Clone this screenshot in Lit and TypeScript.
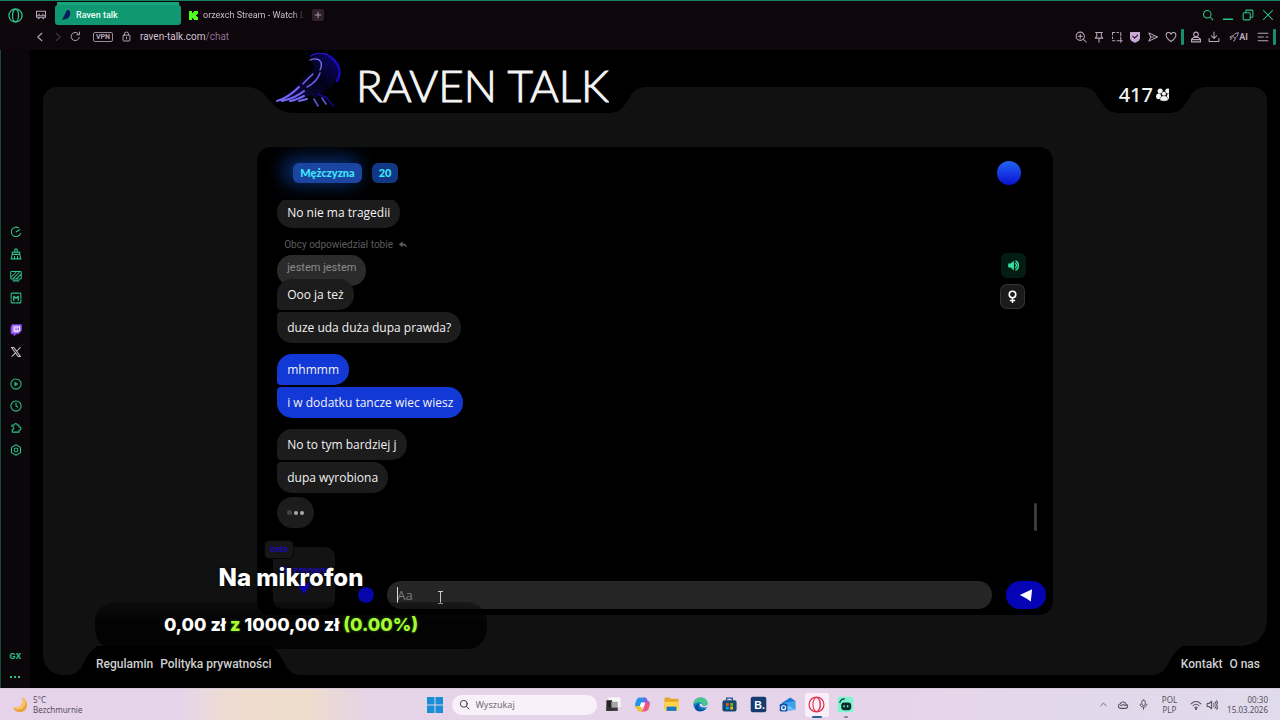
import { LitElement, html, css, svg } from "lit";
import { customElement } from "lit/decorators.js";
import { classMap } from "lit/directives/class-map.js";

const icon = (body: unknown, size = 12, box = 16) => html`<svg
  class="ic" width=${size} height=${size} viewBox="0 0 ${box} ${box}" fill="none"
  stroke="currentColor" stroke-width="1.4" stroke-linecap="round" stroke-linejoin="round"
  aria-hidden="true">${body}</svg>`;

const G = {
  opera: svg`<circle cx="8" cy="8" r="7"/><ellipse cx="8" cy="8" rx="3.2" ry="6.6"/>`,
  workspace: svg`<path d="M2 3h12v8h-2l-1 2-1.500-2h-3L5 13l-1-2H2z"/><path d="M5 7h1M10 7h1M2 9h12"/>`,
  back: svg`<path d="M10.500 3 5 8l5.500 5"/>`,
  forward: svg`<path d="m5.500 3 5.500 5-5.500 5"/>`,
  reload: svg`<path d="M13.500 9.500A6 6 0 1 1 12 3.800M13.800 1.500v4h-4"/>`,
  lock: svg`<rect x="3" y="6" width="10" height="8.500" rx="1"/><path d="M5 6V4.500a3 3 0 0 1 6 0V6M8 9v2.500"/>`,
  plus: svg`<path d="M8 3.500v9M3.500 8h9"/>`,
  search: svg`<circle cx="7" cy="7" r="5"/><path d="m11 11 3.500 3.500"/>`,
  min: svg`<path stroke-width="2" d="M2 13.500h12"/>`,
  restore: svg`<rect x="1.500" y="5" width="9.500" height="9.500" rx="1.500"/><path d="M5 5V2.500c0-.6.4-1 1-1h7.500c.6 0 1 .4 1 1V10c0 .6-.4 1-1 1H11"/>`,
  close: svg`<path d="m2 2 12 12M14 2 2 14"/>`,
  zoomIn: svg`<circle cx="7" cy="7" r="5.500"/><path d="m11 11 4 4M7 4.500v5M4.500 7h5"/>`,
  pin: svg`<path d="M3.500 2h9M5 2v5l-2 2.500h10L11 7V2M8 9.500V15"/>`,
  snap: svg`<path d="M2 5V2h3M8 2h2M13 2v4M2 8v2M2 13h3M8 13h2M13 8v7M11 13h4"/>`,
  shield: svg`<path d="M2 2h12v7c0 3-3 5-6 6-3-1-6-3-6-6z" fill="#c9a9d8" stroke="#c9a9d8"/><path d="m5 7 2.500 2.500L11.500 5.500" stroke="#1a0f1e"/>`,
  flow: svg`<path d="M2.500 2.500 14 8 2.500 13.500 5 8zM5 8h4"/>`,
  heart: svg`<path d="M8 14C4 11 1.500 8.500 1.500 5.500a3.300 3.300 0 0 1 6.500-1 3.300 3.300 0 0 1 6.500 1C14.500 8.500 12 11 8 14z"/>`,
  stamp: svg`<circle cx="8" cy="4.500" r="3"/><path d="M5 8.500h6l3 2.500v3.500H2V11zM2 11.500h12"/>`,
  download: svg`<path d="M8 1.500v8M4.500 6.500 8 10l3.500-3.500M1.500 10v4h13v-4"/>`,
  rocket: svg`<path d="M14.500 1.500c-4 0-7 2-8.500 5l3.500 3.500c3-1.500 5-4.500 5-8.500zM6 6.500H3L1.500 9 5 9.500M9.500 10v3L7 14.500M2 12l2-1"/>`,
  menu: svg`<path d="M1.500 3h13M1.500 8h7M12 8h2.500M1.500 13h13"/>`,
  gauge: svg`<path d="M14 10a6.300 6.300 0 1 1-2.500-7.500M8 8l5-3"/>`,
  broom: svg`<path d="M6.500 5V1.500h3V5M3 5.500h10v3H3zM3 8.500 1.500 14.500h13L13 8.500M6 11v3.500M10 11v3.500"/>`,
  hatch: svg`<rect x="1" y="2" width="14" height="10" rx="1"/><path d="m2 9 6-6M4 11.500 12.500 3M8.500 11.500 14.500 6M4 14.500h8"/>`,
  mod: svg`<rect x="1.500" y="1.500" width="13" height="13" rx="1" stroke-dasharray="9 1.500"/><path d="M5 11V5.500L8 8.500l3-3V11" stroke-width="1.800"/>`,
  twitch: svg`<path d="M3 1h12v8l-4 4H8l-2.500 2.500V13H1.500V4z" fill="#a970ff" stroke="#7b3fe4"/><path d="M5 3h8.500v5.500l-2 2H5z" fill="#e8dcff" stroke="none"/><path d="M8 5v3M11 5v3" stroke="#7b3fe4"/>`,
  x: svg`<path d="M2 2h3l9 12h-3zM13.500 2 9 7M7 9.500 2.500 14" stroke="#cfcbd0"/>`,
  play: svg`<circle cx="8" cy="8" r="6.800"/><path d="M6.500 5.500 10.500 8l-4 2.500z" fill="currentColor" stroke-width=".6"/>`,
  clock: svg`<circle cx="8" cy="8" r="6.800"/><path d="M8 4v4l2.500 1.500"/>`,
  puzzle: svg`<path d="M3 13.500V10c3 0 3-4-.500-4V4h3.500C6 1.500 9.500 1.500 9.500 4H12v2.500c3.500 0 3.500 4.500 0 4.500v2.500z"/>`,
  gear: svg`<path d="m8 1 6 3.500v7L8 15l-6-3.500v-7z"/><circle cx="8" cy="8" r="2.600"/>`,
  reply: svg`<path d="M7 2 1.500 7 7 12V9c4-.3 6 1 7.500 4C14.500 8 12 5.200 7 5z" fill="currentColor" stroke="none"/>`,
  sound: svg`<path d="M1.500 5.500h3L8.500 2v12l-4-3.500h-3z" fill="currentColor" stroke="none"/><path d="M10.500 5.500c1.500 1.500 1.500 3.500 0 5M11 2.500c4 2 4 9 0 11" stroke-width="1.800"/>`,
  female: svg`<circle cx="8" cy="5.500" r="4" stroke-width="2"/><path d="M8 9.500v6M5.500 12.800h5" stroke-width="1.800"/>`,
  users: svg`<g fill="currentColor" stroke="none"><circle cx="4.200" cy="4" r="2.600"/><circle cx="11.800" cy="4" r="2.600"/><ellipse cx="2.600" cy="9.300" rx="2.500" ry="2.900"/><ellipse cx="13.400" cy="9.300" rx="2.500" ry="2.900"/></g><circle cx="8" cy="6.800" r="2.400" fill="currentColor" stroke="#000" stroke-width=".5"/><path d="M3.800 13c0-3 1.700-4.200 4.200-4.200s4.200 1.200 4.200 4.200c0 1.500-8.400 1.500-8.400 0z" fill="currentColor" stroke="#000" stroke-width=".4"/>`,
  send: svg`<path d="M1 8 15 1.500 13.500 15.500 8.500 12z" fill="#fff" stroke="none"/>`,
  chevron: svg`<path d="m3 10.500 5-5 5 5"/>`,
  cloud: svg`<path d="M4.500 12.500a3.200 3.200 0 0 1 0-6.300 4 4 0 0 1 7.500.8 2.800 2.800 0 0 1 0 5.500zM5 9c2-1.500 5-1.500 7 0"/>`,
  mic: svg`<rect x="5.500" y="1.500" width="5" height="8" rx="2.500"/><path d="M3 7.500c0 6 10 6 10 0M8 12v3"/>`,
  wifi: svg`<path d="M1.500 6.500c4-4 9-4 13 0M4 9c2.500-2.500 5.500-2.500 8 0M6.500 11.500c1-1 2-1 3 0"/><circle cx="8" cy="13" r=".8" fill="currentColor"/>`,
  volume: svg`<path d="M1.500 6h2.500l3.500-3v10L4 10H1.500zM10 6c1 1 1 3 0 4M12 4c2.300 2 2.300 6 0 8M14 2.500c3 3 3 8 0 11"/>`,
};

const APPS = [
  { name: "Widok zadań", art: svg`<rect x="5" y="2" width="17" height="14" fill="#f8f8f8"/><rect x="2" y="6" width="8" height="15" fill="#252525"/><rect x="2" y="16" width="16" height="5" fill="#333"/><rect x="9" y="8" width="9" height="8" fill="#a8a4a8"/>` },
  { name: "Copilot", art: svg`<path d="M8 2h7c2 0 3 1 3.500 3L20 9l-8 4-8 4c-3-1-3-5-1-10 1-3 2-5 5-5z" fill="#2495e6"/><path d="M14 2c3 0 4 1 5 5 3 0 4 2 3 5l-2 5-7-4z" fill="#8d5be8"/><path d="M2 14h7l4 8H9c-3 0-4-1-5-4z" fill="#eec22e"/><path d="M21 9c2 2 1 5 0 8-1 3-3 5-6 5H9c3 0 4-3 5-6l2-7z" fill="#f0567c"/><path d="M10 9h6l-2 6H8z" fill="#fff"/>` },
  { name: "Eksplorator plików", art: svg`<path d="M2 4c0-1 1-2 2-2h5l2 2h10c1 0 1 1 1 2v12H2z" fill="#e4a623"/><path d="M2 8h20v11c0 1-1 2-2 2H4c-1 0-2-1-2-2z" fill="#ffd44d"/><path d="M5 15h14v6H5z" fill="#1676cc"/>` },
  { name: "Edge", art: svg`<circle cx="12" cy="12" r="10" fill="#1279c8"/><path d="M2 12C2 5 8 2 13 2c6 0 9 4 9 8 0 3-3 5-7 4 1-5-6-8-13-2z" fill="#46c98b"/><path d="M10 11c-3 5 1 10 9 7-4 5-17 5-14-4 1-2 3-3 5-3z" fill="#0b4d9c"/><path d="M11 11c-1 3 2 6 9 5 2 0 2-3 2-5-1 3-5 4-7 3 0-2-2-4-4-3z" fill="#e9dcee"/>` },
  { name: "Sklep", art: svg`<path d="M8 6V3h8v3" stroke="#1f5d8b" stroke-width="2" fill="none"/><rect x="2" y="6" width="20" height="16" rx="3" fill="#164970"/><path d="M7 10h4v4H7z" fill="#f25022"/><path d="M13 10h4v4h-4z" fill="#7fba00"/><path d="M7 15h4v4H7z" fill="#00a4ef"/><path d="M13 15h4v4h-4z" fill="#ffb900"/>` },
  { name: "Booking", art: svg`<rect x="1" y="1" width="22" height="22" rx="3" fill="#173a70"/><text x="6" y="18" font-size="15" font-weight="700" font-family="Liberation Sans, sans-serif" fill="#fff">B.</text>` },
  { name: "Outlook", art: svg`<path d="m4 10 12-8 7 5v12H6z" fill="#1976d2"/><path d="M8 9 23 7v12c-5 2-10 2-15 0z" fill="#3ba3ea"/><path d="m8 11 15 8H8z" fill="#76c6f6"/><rect x="1" y="11" width="11" height="11" rx="2" fill="#1458ad"/><circle cx="6.500" cy="16.500" r="2.800" stroke="#fff" stroke-width="1.600" fill="none"/>` },
  { name: "Opera GX", active: true, art: svg`<circle cx="12" cy="12" r="10.500" fill="none" stroke="#e0304f" stroke-width="1.700"/><ellipse cx="12" cy="12" rx="5" ry="10" fill="none" stroke="#e0304f" stroke-width="1.500"/><path d="M15 4c4 4 4 12 0 16" fill="none" stroke="#e0304f"/>` },
  { name: "Streamlabs", running: true, art: svg`<rect x="1" y="1" width="22" height="22" rx="3" fill="#7ff5cf"/><rect x="6" y="9" width="14" height="11" rx="4" fill="#0c2a26"/><path d="M10 13v3M15 13v3" stroke="#7ff5cf" stroke-width="2"/><path d="M4 10c0-4 3-6 7-6" fill="none" stroke="#0c2a26" stroke-width="1.700"/>` },
];

const MESSAGES = [
  { text: "duze uda duża dupa prawda?", last: true },
  { text: "mhmmm", own: true, gap: true, first: true },
  { text: "i w dodatku tancze wiec wiesz", own: true, last: true },
  { text: "No to tym bardziej j", gap: true, first: true },
  { text: "dupa wyrobiona", last: true },
];

const base = css`
  :host { box-sizing: border-box; }
  *, *::before, *::after { box-sizing: border-box; }
  button, input { font: inherit; color: inherit; background: none; border: 0; margin: 0; padding: 0; }
  a { color: inherit; text-decoration: none; }
  button { display: flex; align-items: center; justify-content: center; }
  svg { display: block; flex: none; }
`;

@customElement("browser-chrome")
class BrowserChrome extends LitElement {
  static styles = [base, css`
    :host { display: block; background: #0d060b; color: #b9a6ba; font-family: Roboto, sans-serif; border-top: 1px solid #15815f; }
    .row { display: flex; align-items: center; }
    .tabs { height: 28px; padding: 0 6px 0 8px; }
    .green { color: #2bc48a; }
    .tab { display: flex; align-items: center; gap: 5px; height: 20px; padding: 0 6px; font-size: 9px; }
    .current { width: 126px; margin-left: 8px; background: #109873; color: #e8fff6; border-radius: 3px; font-weight: 500; box-shadow: 0 -5px 0 -2px #1ba47b; }
    .other { width: 124px; margin-left: 2px; padding-right: 0; color: #cdbdcc; }
    .label { white-space: nowrap; overflow: hidden; }
    .other .label { mask-image: linear-gradient(90deg, #000 88%, transparent); }
    .add { width: 12px; height: 12px; background: #30202c; border-radius: 2px; margin-left: 5px; }
    .opera { margin-right: 12px; }
    .end { margin-left: auto; display: flex; align-items: center; gap: 8px; }
    .address { height: 21px; padding: 0 4px 6px 34px; gap: 6px; }
    .dim { opacity: .3; }
    .vpn { font-size: 7px; font-weight: 700; line-height: 8px; border: 1px solid #9b899b; border-radius: 2px; padding: 0 2px; margin: 0 2px 0 6px; }
    .url { font-size: 10px; color: #d3c1d2; margin-left: 2px; }
    .path { color: #8d6d91; }
    .bar { width: 3px; height: 16px; background: #178f6c; border-radius: 1px; margin-left: -2px; }
    .tools { gap: 6px; }
    .ai { display: flex; align-items: center; font-size: 9px; font-weight: 700; margin: 0 3px; }
  `];
  render() {
    return html`
      <div class="row tabs">
        <button class="green opera" aria-label="Opera">${icon(G.opera, 15)}</button>
        <button aria-label="Workspace">${icon(G.workspace, 12)}</button>
        <a class="tab current" href="#"><svg width="10" height="12" viewBox="0 0 10 12"><path d="M1 11 5 3c1-3 4-2 4 0 1 3-1 6-4 7z" fill="#0a1a5c"/></svg><span class="label">Raven talk</span></a>
        <a class="tab other" href="#"><svg width="9" height="9" viewBox="0 0 9 9"><path d="M0 0h3v2h1V1h1V0h4v3H8v1H7v1h1v1h1v3H5V8H4V7H3v2H0z" fill="#4dfc19"/></svg><span class="label">orzexch Stream - Watch L</span></a>
        <button class="add" aria-label="New tab">${icon(G.plus, 10)}</button>
        <div class="end green">
          <button aria-label="Search tabs">${icon(G.search)}</button>
          <button aria-label="Minimize">${icon(G.min)}</button>
          <button aria-label="Restore">${icon(G.restore)}</button>
          <button aria-label="Close">${icon(G.close)}</button>
        </div>
      </div>
      <div class="row address">
        <button aria-label="Back">${icon(G.back)}</button>
        <button class="dim" aria-label="Forward">${icon(G.forward)}</button>
        <button aria-label="Reload">${icon(G.reload, 11)}</button>
        <span class="vpn">VPN</span>
        ${icon(G.lock, 11)}
        <span class="url">raven-talk.com<span class="path">/chat</span></span>
        <div class="end tools">
          ${[G.zoomIn, G.pin, G.snap, G.shield, G.flow, G.heart].map((g) => icon(g))}
          <span class="bar"></span>
          ${icon(G.stamp)}${icon(G.download)}
          <span class="ai">${icon(G.rocket, 10)}AI</span>
          ${icon(G.menu)}
          <span class="bar"></span>
        </div>
      </div>`;
  }
}

@customElement("side-bar")
class SideBar extends LitElement {
  static styles = [base, css`
    :host { display: flex; flex-direction: column; align-items: center; width: 30px; background: #0b060a; color: #2bc48a; border-left: 1px solid #124a3b; padding: 176px 0 6px; font: 700 8px Inter, sans-serif; }
    .group { display: flex; flex-direction: column; gap: 10px; margin-bottom: 20px; }
    .bottom { margin-top: auto; display: flex; flex-direction: column; align-items: center; gap: 16px; line-height: 8px; }
    .dots { display: flex; gap: 2px; height: 6px; }
    .dots i { width: 2px; height: 2px; background: currentColor; }
  `];
  render() {
    const groups = [[G.gauge, G.broom, G.hatch, G.mod], [G.twitch, G.x], [G.play, G.clock, G.puzzle, G.gear]];
    return html`${groups.map((g) => html`<div class="group">${g.map((i) => icon(i))}</div>`)}
      <div class="bottom"><span>GX</span><span class="dots"><i></i><i></i><i></i></span></div>`;
  }
}

@customElement("chat-card")
class ChatCard extends LitElement {
  static styles = [base, css`
    :host { display: flex; flex-direction: column; width: 65%; background: #000; border-radius: 14px; color: #f2f2f2; font-family: "Open Sans", "Noto Sans", sans-serif; font-size: 12px; font-weight: 500; overflow: hidden; }
    .head { display: flex; align-items: flex-start; gap: 10px; padding: 14px 32px 0 36px; height: 53px; font: 900 11px Lato, sans-serif; color: #3fe6fb; }
    .badge { height: 20px; line-height: 20px; padding: 0 7px; border-radius: 6px; background: #113884; margin-top: 2px; }
    .glow { background: #1a45a0; box-shadow: -6px -2px 18px 3px #082e73; }
    .orb { width: 24px; height: 24px; border-radius: 50%; margin-left: auto; background: linear-gradient(#2463f4, #0713cf); }
    .body { flex: 1; min-height: 0; display: flex; padding: 0 16px 16px 20px; }
    .list { flex: 1; display: flex; flex-direction: column; align-items: flex-start; justify-content: flex-end; overflow: hidden; padding-bottom: 3px; }
    .msg { flex: none; height: 31px; line-height: 32px; padding: 0 10px; border-radius: 4px 15px 15px 4px; background: #1c1c1d; margin-top: 2px; }
    .first { border-top-left-radius: 15px; }
    .last { border-bottom-left-radius: 15px; }
    .gap { margin-top: 11px; }
    .own { background: #1238d6; }
    .note { flex: none; display: flex; align-items: center; gap: 5px; margin: 9px 0 1px 7px; font: 10px/15px Roboto, sans-serif; color: #5c5c5c; }
    .quote { background: #2b2b2b; color: #8b8b8b; line-height: 26px; font-family: Roboto, sans-serif; font-size: 11px; font-weight: 400; border-radius: 15px; }
    .over { margin-top: -7px; }
    .typing { display: flex; align-items: center; gap: 2px; margin-top: 4px; border-radius: 16px; }
    .dot { width: 4px; height: 4px; border-radius: 50%; background: #aaa; }
    .faint { width: 5px; height: 5px; background: #444; }
    .actions { display: flex; flex-direction: column; gap: 7px; padding: 53px 8px 0 0; }
    .action { width: 25px; height: 25px; border-radius: 6px; background: #031c14; color: #35e0a0; }
    .sex { height: 23px; width: 23px; background: #1b1b1b; box-shadow: 0 0 0 1px #333; color: #fff; }
    .thumb { align-self: flex-end; width: 3px; height: 28px; border-radius: 2px; background: #3a3a3a; }
    .composer { display: flex; align-items: flex-end; padding: 0 7px 6px 16px; }
    .sticker { position: relative; width: 62px; height: 62px; border-radius: 10px; background: #131313; color: #1a0bb0; font: 700 10px/14px Inter, sans-serif; flex-direction: column; gap: 6px; }
    .tag { position: absolute; left: -8px; top: -6px; height: 17px; width: 28px; border-radius: 4px; background: #171717; box-shadow: 0 0 0 1px #050505; font-size: 8px; line-height: 17px; }
    .emoji { width: 16px; height: 16px; border-radius: 50%; background: #0505a8; margin: 0 13px 6px 23px; }
    .field { position: relative; flex: 1; height: 28px; border-radius: 14px; background: #252525; }
    .input { width: 100%; height: 28px; padding: 0 10px; font-size: 13px; outline: none; }
    .input::placeholder { color: #7c7c7c; opacity: 1; }
    .caret { position: absolute; left: 10px; top: 6px; width: 1px; height: 16px; background: #ddd; }
    .pointer { position: absolute; left: 50px; top: 10px; color: #ccc; }
    .send { width: 40px; height: 28px; border-radius: 14px; background: #0504b4; margin-left: 14px; }
  `];
  render() {
    return html`
      <div class="head">
        <span class="badge glow">Mężczyzna</span><span class="badge">20</span>
        <button class="orb" aria-label="Motyw"></button>
      </div>
      <div class="body">
        <div class="list">
          <div class="msg first last">No nie ma tragedii</div>
          <div class="note">Obcy odpowiedział tobie ${icon(G.reply, 10)}</div>
          <div class="msg quote">jestem jestem</div>
          <div class="msg first over">Ooo ja też</div>
          ${MESSAGES.map((m) => html`<div class=${classMap({ msg: true, own: !!m.own, first: !!m.first, last: !!m.last, gap: !!m.gap })}>${m.text}</div>`)}
          <div class="msg typing"><span class="dot faint"></span><span class="dot"></span><span class="dot"></span></div>
        </div>
        <div class="actions">
          <button class="action" aria-label="Dźwięk">${icon(G.sound, 13)}</button>
          <button class="action sex" aria-label="Płeć">${icon(G.female, 13)}</button>
        </div>
        <div class="thumb"></div>
      </div>
      <div class="composer">
        <button class="sticker"><span class="tag">beta</span><span>Rozmowy</span>
          <svg width="14" height="11" viewBox="0 0 14 11"><path d="M2 0h10v4L7 11 2 4z" fill="#0b07b8"/></svg></button>
        <button class="emoji" aria-label="Emoji"></button>
        <div class="field">
          <input class="input" placeholder="Aa" aria-label="Wiadomość" />
          <span class="caret"></span>
          <svg class="pointer" width="7" height="13" viewBox="0 0 7 13" fill="none" stroke="currentColor"><path d="M1 .5h5M1 12.500h5M3.500 .5v12"/></svg>
        </div>
        <button class="send" aria-label="Wyślij">${icon(G.send, 14)}</button>
      </div>`;
  }
}

@customElement("raven-page")
class RavenPage extends LitElement {
  static styles = [base, css`
    :host { display: flex; flex-direction: column; min-width: 0; background: #000; color: #f4f4f4; padding: 0 13px 13px; }
    .top, .foot { position: relative; z-index: 1; display: flex; justify-content: space-between; }
    .top { height: 63px; align-items: stretch; padding: 0 60px 0 200px; }
    .notch { display: flex; align-items: flex-end; }
    .mid { display: flex; align-items: center; align-self: stretch; background: #000; }
    .brand { margin: 0; padding: 6px 0 0; font: 300 44px Lato, sans-serif; gap: 13px; white-space: nowrap; -webkit-text-stroke: 1px #f4f4f4; }
    .raven { margin: -8px 0 0 -20px; }
    .count { font: 500 20px "Noto Sans", sans-serif; gap: 3px; padding: 26px 0 0; margin-right: -3px; }
    .panel { flex: 1; min-height: 0; display: flex; justify-content: center; background: #111; border-radius: 14px 14px 0 20px; margin: -26px 0 -29px; padding: 60px 0; }
    .foot { height: 29px; font: 500 12px/14px Roboto, sans-serif; color: #cfcfcf; padding-left: 23px; }
    .links { padding: 11px 0 0; gap: 7px; align-items: flex-start; margin: 0 -8px; z-index: 1; }
    .right { position: relative; padding-right: 19px; }
    .right::after { content: ""; position: absolute; right: 12px; top: -24px; width: 24px; height: 24px; background: radial-gradient(circle at 0 0, transparent 23px, #000 24px); }
    .end { margin-right: -4px; }
  `];
  curve(w: number, h: number, kind: "tl" | "tr" | "bl" | "br") {
    const flip = { tl: "", tr: `translate(${w} 0) scale(-1 1)`, bl: `translate(0 ${h}) scale(1 -1)`, br: `translate(${w} ${h}) scale(-1 -1)` }[kind];
    const d = `M0 0C${w * 0.3} 0 ${w * 0.38} ${h * 0.2} ${w * 0.5} ${h * 0.5}S${w * 0.75} ${h} ${w} ${h}V0z`;
    return html`<svg width=${w} height=${h} viewBox="0 0 ${w} ${h}" aria-hidden="true"><path d=${d} transform=${flip} fill="#000"/></svg>`;
  }
  render() {
    return html`
      <header class="top">
        <div class="notch">
          ${this.curve(52, 26, "tl")}
          <h1 class="mid brand">
            <svg class="raven" width="68" height="56" viewBox="0 0 68 56" fill="none" stroke-linecap="round">
              <defs><linearGradient id="r" x1="0" y1="1" x2="1" y2="0"><stop offset="0" stop-color="#2a16b8"/><stop offset=".6" stop-color="#060330"/><stop offset="1" stop-color="#1a0ce0"/></linearGradient></defs>
              <path d="M35 7C40 0 50 0 56 4c7 6 9 15 4 24-4 8-9 11-15 13l-3 3 3 8-4-7-5-3C25 47 14 49 2 48c9-5 18-12 23-19 5-7 10-9 13-14 1-4 0-6-3-8z" fill="url(#r)" opacity=".5"/>
              <path d="M54 3c10 6 13 16 8 25" stroke="#170ac0" stroke-width="2.500"/>
              <path d="M35 7c5-2 9-1 11 2 1 3 0 6-1 8" stroke="#7a72e8" stroke-width="1.300"/>
              <path d="M36 3c4-3 11-4 17-1" stroke="#2213d0" stroke-width="1.500"/>
              <path d="M45 20c-2 6-7 11-13 14M38 21c-4 4-7 6-10 10" stroke="#6a60e8" stroke-width="1.500"/>
              <path d="M2 48c10-3 17-9 22-14M7 48c9-2 17-6 22-10M15 48c6-1 10-3 14-5M24 48l8-2" stroke="#7468f2" stroke-width="2"/>
              <path d="m39 46 4 7M47 45l4 6" stroke="#6056d8" stroke-width="1.600"/><path d="m43 41 9 4 6 8" stroke="#100780" stroke-width="2"/>
            </svg><span>RAVEN TALK</span>
          </h1>
          ${this.curve(38, 26, "tr")}
        </div>
        <div class="notch">
          ${this.curve(38, 26, "tl")}
          <div class="mid count">417 ${icon(G.users, 16)}</div>
          ${this.curve(38, 26, "tr")}
        </div>
      </header>
      <main class="panel"><chat-card></chat-card></main>
      <footer class="foot">
        <div class="notch">
          ${this.curve(38, 29, "bl")}
          <nav class="mid links"><a href="#">Regulamin</a><a href="#">Polityka prywatności</a></nav>
          ${this.curve(38, 29, "br")}
        </div>
        <div class="notch end">
          ${this.curve(38, 29, "bl")}
          <nav class="mid links right"><a href="#">Kontakt</a><a href="#">O nas</a></nav>
        </div>
      </footer>`;
  }
}

@customElement("task-bar")
class TaskBar extends LitElement {
  static styles = [base, css`
    :host { display: grid; grid-template-columns: 1fr auto 1fr; align-items: center; height: 32px; color: #55505c; font: 8px/10px "Noto Sans", sans-serif;
      background: linear-gradient(90deg, #e6d3ea 0, #e4d5ea 14%, #efdcd0 18%, #eedccc 24%, #e5d3e8 29%, #e6d5ea 70%, #e0dbec 100%); border-top: 1px solid #d6cadb; }
    .weather, .mid, .tray { display: flex; align-items: center; }
    .weather { gap: 5px; padding-left: 13px; }
    .mid { gap: 5px; }
    .win { width: 24px; }
    .search { display: flex; align-items: center; gap: 6px; width: 145px; height: 20px; border-radius: 10px; background: #f8f1fa; padding: 0 7px; color: #39343f; }
    .input { width: 100px; font-size: 9px; outline: none; }
    .input::placeholder { color: #716b77; opacity: 1; }
    .apps { display: flex; gap: 5px; }
    .app { position: relative; width: 24px; height: 24px; border-radius: 3px; }
    .active { background: #f8eff9; }
    .mark { position: absolute; bottom: -1px; left: 10px; width: 4px; height: 2px; border-radius: 1px; background: #8a8490; }
    .active .mark { left: 7px; width: 10px; background: #2a6296; }
    .tray { justify-content: flex-end; gap: 9px; padding-right: 12px; }
    .lang { text-align: center; margin: 0 4px; }
    .net { display: flex; gap: 4px; }
    .time { text-align: right; }
  `];
  render() {
    return html`
      <div class="weather">
        <svg width="15" height="16" viewBox="0 0 15 16"><path d="M9 0c8 5 6 15-2 15-4 0-6-2-7-5 6 2 11-2 9-10z" fill="#eda13c"/><path d="M9 0c5 4 4 10-1 12-3 1-6 0-8-2 6 2 11-2 9-10z" fill="#f8c766"/></svg>
        <div>5°C<br />Bezchmurnie</div>
      </div>
      <div class="mid">
        <button class="win" aria-label="Start"><svg width="16" height="16" viewBox="0 0 16 16"><path d="M0 0h7.500v7.500H0zM8.500 0H16v7.500H8.500zM0 8.500h7.500V16H0zM8.500 8.500H16V16H8.500z" fill="#1b8fd6"/></svg></button>
        <label class="search">${icon(G.search, 11)}<input class="input" placeholder="Wyszukaj" aria-label="Wyszukaj" /></label>
        <div class="apps">
          ${APPS.map((a) => html`<button class=${classMap({ app: true, active: !!a.active })} aria-label=${a.name}>
            <svg width="17" height="17" viewBox="0 0 24 24">${a.art}</svg>
            ${a.active || a.running ? html`<span class="mark"></span>` : ""}</button>`)}
        </div>
      </div>
      <div class="tray">
        ${icon(G.chevron, 9)}${icon(G.cloud)}${icon(G.mic, 11)}
        <div class="lang">POL<br />PLP</div>
        <div class="net">${icon(G.wifi)}${icon(G.volume)}</div>
        <div class="time">00:30<br />15.03.2026</div>
      </div>`;
  }
}

@customElement("app-root")
class AppRoot extends LitElement {
  static styles = [base, css`
    :host { position: relative; display: grid; grid-template: auto minmax(0, 1fr) auto / auto minmax(0, 1fr); height: 100vh; overflow: hidden; background: #000; }
    .wide { grid-column: 1 / -1; }
    .goal { position: absolute; z-index: 2; left: 95px; bottom: 71px; text-align: center; color: #fff; font: 800 18px Inter, sans-serif; }
    .title { margin: 0 0 8px; font-size: 24px; line-height: 32px; font-weight: 800; text-shadow: 0 0 3px #000; }
    .pill { width: 392px; height: 47px; line-height: 45px; border-radius: 20px; background: linear-gradient(rgba(0, 0, 0, .3), rgba(0, 0, 0, .85) 45%); }
    .lime { color: #a6fb35; text-shadow: 0 0 3px #2c6b00; }
  `];
  render() {
    return html`
      <browser-chrome class="wide"></browser-chrome>
      <side-bar></side-bar>
      <raven-page></raven-page>
      <task-bar class="wide"></task-bar>
      <section class="goal">
        <h2 class="title">Na mikrofon</h2>
        <div class="pill">0,00 zł <span class="lime">z</span> 1000,00 zł <span class="lime">(0.00%)</span></div>
      </section>`;
  }
}
